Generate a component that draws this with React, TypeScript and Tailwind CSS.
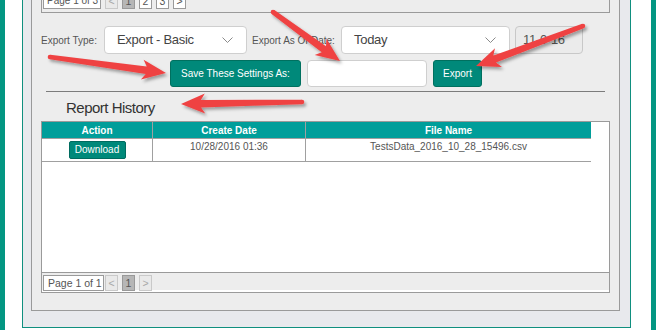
import React from "react";

type P = [number, number];

function arrowPoints(t: P, h: P) {
  const dx = h[0] - t[0];
  const dy = h[1] - t[1];
  const len = Math.hypot(dx, dy);
  const ux = dx / len;
  const uy = dy / len;
  const nx = -uy;
  const ny = ux;
  const L = 22;
  const H = 10;
  const w1 = 2.3;
  const w2 = 3.7;
  const bx = h[0] - ux * L;
  const by = h[1] - uy * L;
  const pts: P[] = [
    [t[0] + nx * w1, t[1] + ny * w1],
    [bx + nx * w2 + ux * 2, by + ny * w2 + uy * 2],
    [bx + nx * H - ux * 2, by + ny * H - uy * 2],
    h,
    [bx - nx * H - ux * 2, by - ny * H - uy * 2],
    [bx - nx * w2 + ux * 2, by - ny * w2 + uy * 2],
    [t[0] - nx * w1, t[1] - ny * w1],
  ];
  return pts.map((p) => p.map((v) => v.toFixed(1)).join(",")).join(" ");
}

const arrows: [P, P][] = [
  [[50, 57], [166, 73]],
  [[273, 12], [340, 61]],
  [[583, 26], [476, 66]],
  [[302, 102], [181, 104]],
];

function Chevron() {
  return (
    <svg width="11" height="7" viewBox="0 0 11 7" className="shrink-0">
      <polyline points="0.5,0.5 5.5,5.5 10.5,0.5" fill="none" stroke="#8a8a8a" strokeWidth="1" />
    </svg>
  );
}

function NavBtn({ label, kind }: { label: string; kind: "dis" | "sel" | "num" }) {
  const cls =
    kind === "dis"
      ? "border-[#c9c9c9] bg-[#e9e9e9] text-[#a8a8a8]"
      : kind === "sel"
      ? "border-[#999] bg-[#b6b6b6] text-[#555]"
      : "border-[#9a9a9a] bg-white text-[#555]";
  return (
    <div className={`w-[13px] h-[16px] shrink-0 border ${cls} flex items-center justify-center text-[10.5px] leading-none whitespace-nowrap`}>
      {label}
    </div>
  );
}

export default function App() {
  return (
    <div className="relative w-[656px] h-[330px] overflow-hidden bg-white flex font-['Liberation_Sans',Arial,sans-serif]">
      <div className="w-[5px] h-full bg-[#039682]" />
      <div className="w-[17px]" />
      <div className="w-[609px] h-[328px] border-x border-b border-[#0f8f7f] bg-[#e8e9ed] pl-[8px] pr-[10px] pb-[16px] flex flex-col">
        <div className="flex-1 border-x border-b border-[#9a9a9a] bg-[#ededed] px-[9px] pb-[17px] flex flex-col">
          {/* top table remnant */}
          <div className="h-[13px] border-x border-b border-[#9a9a9a] flex items-end pb-[3px] pl-[1px]">
            <div className="w-[58px] h-[16px] shrink-0 border border-[#9a9a9a] bg-white text-[10px] text-[#555] flex items-center pl-[3px] leading-none whitespace-nowrap overflow-hidden">
              Page 1 of 3
            </div>
            <div className="ml-[4px] flex gap-[4px]">
              <NavBtn label="<" kind="dis" />
              <NavBtn label="1" kind="sel" />
              <NavBtn label="2" kind="num" />
              <NavBtn label="3" kind="num" />
              <NavBtn label=">" kind="num" />
            </div>
          </div>

          {/* export row */}
          <div className="mt-[13px] h-[28px] flex items-center">
            <div className="w-[63px] shrink-0 text-[10px] text-[#555] whitespace-nowrap">Export Type:</div>
            <div className="w-[143px] h-[28px] shrink-0 border border-[#cfcfcf] rounded-[4px] bg-white flex items-center pl-[12px] pr-[13px]">
              <span className="flex-1 text-[13px] tracking-[-0.3px] text-[#444] whitespace-nowrap">Export - Basic</span>
              <Chevron />
            </div>
            <div className="ml-[5px] w-[89px] shrink-0 text-[10px] text-[#555] whitespace-nowrap">Export As Of Date:</div>
            <div className="w-[169px] h-[28px] shrink-0 border border-[#cfcfcf] rounded-[4px] bg-white flex items-center pl-[12px] pr-[13px]">
              <span className="flex-1 text-[13px] tracking-[-0.3px] text-[#444]">Today</span>
              <Chevron />
            </div>
            <div className="ml-[5px] w-[68px] h-[28px] shrink-0 border border-[#c8c8c8] rounded-[4px] bg-[#ebebeb] flex items-center pl-[7px] text-[13px] tracking-[-0.3px] text-[#555] whitespace-nowrap">
              11-0-16
            </div>
          </div>

          {/* save row */}
          <div className="mt-[6px] h-[27px] flex">
            <button className="ml-[129px] w-[131px] h-[27px] shrink-0 rounded-[3px] border border-[#00705f] bg-[#00897a] text-white text-[10px] whitespace-nowrap font-['Liberation_Sans',Arial,sans-serif]">
              Save These Settings As:
            </button>
            <div className="ml-[6px] w-[120px] h-[27px] shrink-0 rounded-[4px] border border-[#cfcfcf] bg-white" />
            <button className="ml-[6px] w-[49px] h-[27px] shrink-0 rounded-[3px] border border-[#00705f] bg-[#00897a] text-white text-[10px] font-['Liberation_Sans',Arial,sans-serif]">
              Export
            </button>
          </div>

          <div className="mt-[4px] mx-[5px] h-[1px] bg-[#7c7c7c]" />

          <div className="h-[29px] pt-[7px] pl-[25px] text-[15px] leading-[17px] tracking-[-0.5px] text-[#333] whitespace-nowrap">
            Report History
          </div>

          {/* history table */}
          <div className="h-[172px] border border-[#9a9a9a] bg-white flex flex-col">
            <div className="w-[549px] h-[17px] border-b border-[#a0a0a0] bg-[#009e9a] flex text-white text-[10px] font-bold">
              <div className="w-[111px] border-r border-[#a0a0a0] flex items-center justify-center">Action</div>
              <div className="w-[153px] border-r border-[#a0a0a0] flex items-center justify-center">Create Date</div>
              <div className="flex-1 flex items-center justify-center">File Name</div>
            </div>
            <div className="w-[549px] h-[23px] border-b border-[#a0a0a0] flex text-[10px] text-[#555]">
              <div className="w-[111px] border-r border-[#a0a0a0] flex justify-center pt-[2px]">
                <button className="w-[57px] h-[18px] rounded-[2px] border border-[#006b5f] bg-[#00897a] text-white text-[10px] leading-none font-['Liberation_Sans',Arial,sans-serif]">
                  Download
                </button>
              </div>
              <div className="w-[153px] border-r border-[#a0a0a0] text-center pt-[2px] leading-[12px]">10/28/2016 01:36</div>
              <div className="flex-1 text-center pt-[2px] leading-[12px]">TestsData_2016_10_28_15496.csv</div>
            </div>
            <div className="flex-1" />
            <div className="h-[20px] border-t border-[#9a9a9a] bg-[linear-gradient(#ededed_0_17px,#ffffff_17px)] flex items-start pt-[2px] pl-[1px]">
              <div className="w-[61px] h-[16px] shrink-0 border border-[#9a9a9a] bg-white text-[10.5px] text-[#555] flex items-center pl-[4px] leading-none whitespace-nowrap">
                Page 1 of 1
              </div>
              <div className="ml-[1px] flex gap-[4px]">
                <NavBtn label="<" kind="dis" />
                <NavBtn label="1" kind="sel" />
                <NavBtn label=">" kind="dis" />
              </div>
            </div>
          </div>
        </div>
      </div>
      <div className="w-[20px]" />
      <div className="w-[5px] h-full bg-[#039682]" />

      <svg className="absolute inset-0 pointer-events-none" width="656" height="330" viewBox="0 0 656 330">
        <defs>
          <filter id="sh" x="-20%" y="-50%" width="140%" height="200%">
            <feDropShadow dx="2" dy="2.5" stdDeviation="1.6" floodColor="#000" floodOpacity="0.35" />
          </filter>
        </defs>
        {arrows.map(([t, h], i) => (
          <g key={i} filter="url(#sh)">
            <polygon points={arrowPoints(t, h)} fill="#ef4343" />
            <circle cx={t[0]} cy={t[1]} r={2.3} fill="#ef4343" />
          </g>
        ))}
      </svg>
    </div>
  );
}
